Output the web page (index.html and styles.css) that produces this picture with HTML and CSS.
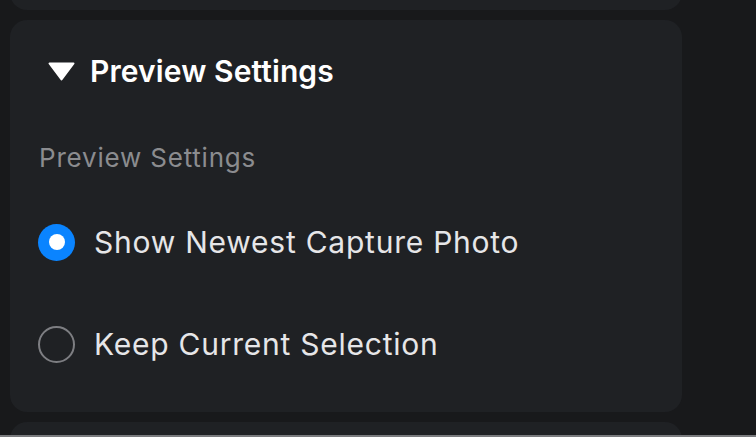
FILE: index.html
```html
<!DOCTYPE html>
<html lang="en">
<head>
<meta charset="utf-8">
<title>Preview Settings</title>
<link rel="stylesheet" href="styles.css">
</head>
<body>
<div class="screen">
  <div class="list">
    <div class="card card-prev"></div>
    <section class="card card-main">
      <header class="section-header">
        <svg class="disclosure" width="27" height="19" viewBox="0 0 27 19" aria-hidden="true">
          <path d="M1.5 1.5 H25.5 L13.5 17.5 Z" fill="#ffffff" stroke="#ffffff" stroke-width="2" stroke-linejoin="round"/>
        </svg>
        <h2 class="section-title">Preview Settings</h2>
      </header>
      <div class="group-label">Preview Settings</div>
      <div class="options">
        <label class="option">
          <span class="radio radio-on"><span class="radio-dot"></span></span>
          <span class="option-text">Show Newest Capture Photo</span>
        </label>
        <label class="option">
          <span class="radio radio-off"></span>
          <span class="option-text">Keep Current Selection</span>
        </label>
      </div>
    </section>
    <div class="card card-next"></div>
  </div>
  <div class="frame-line"></div>
</div>
</body>
</html>
```

FILE: styles.css
```css
* { box-sizing: border-box; }

html, body {
  margin: 0;
  padding: 0;
  background: #18191b;
}

body {
  font-family: Inter, "Noto Sans", "Liberation Sans", sans-serif;
  -webkit-font-smoothing: antialiased;
}

.screen {
  width: 756px;
  height: 437px;
  display: flex;
  flex-direction: column;
  overflow: hidden;
  background: #18191b;
}

.list {
  flex: 1;
  overflow: hidden;
  display: flex;
  flex-direction: column;
  gap: 10px;
  padding-left: 10px;
  width: 682px;
}

.card {
  background: #1f2124;
  border-radius: 17px;
  flex-shrink: 0;
}

.card-prev {
  height: 40px;
  margin-top: -30px;
}

.card-main {
  height: 392px;
  padding: 26px 0 0 28px;
  display: flex;
  flex-direction: column;
}

.card-next {
  height: 40px;
}

.section-header {
  height: 50px;
  display: flex;
  align-items: center;
  gap: 15px;
  padding-left: 10px;
}

.disclosure {
  display: block;
  flex-shrink: 0;
}

.section-title {
  margin: 0;
  font-size: 30px;
  line-height: 50px;
  font-weight: 600;
  letter-spacing: 0.1px;
  color: #ffffff;
}

.group-label {
  margin-top: 46px;
  font-size: 26px;
  line-height: 32px;
  letter-spacing: 0.8px;
  color: #8b8c8f;
  padding-left: 1px;
}

.options {
  margin-top: 38px;
  display: flex;
  flex-direction: column;
  gap: 42px;
}

.option {
  height: 60px;
  display: flex;
  align-items: center;
  gap: 19px;
}

.radio {
  width: 37px;
  height: 37px;
  border-radius: 50%;
  flex-shrink: 0;
  display: flex;
  align-items: center;
  justify-content: center;
}

.radio-on {
  background: #0a84ff;
}

.radio-dot {
  width: 16px;
  height: 16px;
  border-radius: 50%;
  background: #ffffff;
}

.radio-off {
  border: 2px solid #7d7e82;
}

.option-text {
  font-size: 30px;
  line-height: 36px;
  letter-spacing: 0.76px;
  color: #e6e6e8;
}

.frame-line {
  height: 2px;
  flex-shrink: 0;
  background: #7a7b7e;
}
```
